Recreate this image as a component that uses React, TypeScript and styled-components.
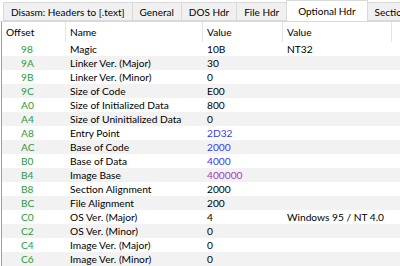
import React from 'react';
import styled, { createGlobalStyle } from 'styled-components';

type Row = {
    offset: string,
    name: string,
    value: string,
    tone?: 'plain' | 'blue' | 'purple',
    note?: string,
}

const rows: Row[] = [
    { offset: '98', name: 'Magic', value: '10B', note: 'NT32' },
    { offset: '9A', name: 'Linker Ver. (Major)', value: '30' },
    { offset: '9B', name: 'Linker Ver. (Minor)', value: '0' },
    { offset: '9C', name: 'Size of Code', value: 'E00' },
    { offset: 'A0', name: 'Size of Initialized Data', value: '800' },
    { offset: 'A4', name: 'Size of Uninitialized Data', value: '0' },
    { offset: 'A8', name: 'Entry Point', value: '2D32', tone: 'blue' },
    { offset: 'AC', name: 'Base of Code', value: '2000', tone: 'blue' },
    { offset: 'B0', name: 'Base of Data', value: '4000', tone: 'blue' },
    { offset: 'B4', name: 'Image Base', value: '400000', tone: 'purple' },
    { offset: 'B8', name: 'Section Alignment', value: '2000' },
    { offset: 'BC', name: 'File Alignment', value: '200' },
    { offset: 'C0', name: 'OS Ver. (Major)', value: '4', note: 'Windows 95 / NT 4.0' },
    { offset: 'C2', name: 'OS Ver. (Minor)', value: '0' },
    { offset: 'C4', name: 'Image Ver. (Major)', value: '0' },
    { offset: 'C6', name: 'Image Ver. (Minor)', value: '0' },
];

const tabs = ['Disasm: Headers to [.text]', 'General', 'DOS Hdr', 'File Hdr', 'Optional Hdr', 'Section Hdrs'];

export default function App() {
    return (
        <>
            <GlobalStyle />
            <Window>
                <TabBar>
                    {tabs.map((t) => (
                        <Tab key={t} $active={t === 'Optional Hdr'}>{t}</Tab>
                    ))}
                </TabBar>
                <Table>
                    <HeaderRow>
                        <HeadCell>Offset</HeadCell>
                        <HeadCell>Name</HeadCell>
                        <HeadCell>Value</HeadCell>
                        <HeadCell>Value</HeadCell>
                        <HeadCell />
                    </HeaderRow>
                    {rows.map((r, i) => (
                        <DataRow key={r.offset} $odd={i % 2 === 1}>
                            <OffsetCell>{r.offset}</OffsetCell>
                            <Cell>{r.name}</Cell>
                            <Cell $tone={r.tone}>{r.value}</Cell>
                            <Cell>{r.note}</Cell>
                            <Cell />
                        </DataRow>
                    ))}
                </Table>
            </Window>
        </>
    );
}

const GlobalStyle = createGlobalStyle`
    html, body {
        margin: 0;
        padding: 0;
        background: #ffffff;
    }
    body {
        font-family: Lato, "Liberation Sans", sans-serif;
        font-size: 10.2px;
        color: #000000;
    }
`

const Window = styled.div`
    width: 400px;
    height: 266px;
    overflow: hidden;
    display: flex;
    flex-direction: column;
`

const TabBar = styled.div`
    height: 22px;
    flex: none;
    display: flex;
    align-items: flex-end;
    padding-left: 4px;
    border-bottom: 1px solid #d9d9d9;
    box-sizing: border-box;
    background: #ffffff;
    white-space: nowrap;
    overflow: hidden;
`

const Tab = styled.div<{ $active?: boolean }>`
    box-sizing: border-box;
    height: ${(p) => (p.$active ? '22px' : '19px')};
    margin-bottom: ${(p) => (p.$active ? '-1px' : '0')};
    padding: ${(p) => (p.$active ? '0 11px 2px' : '0 7px')};
    display: flex;
    align-items: center;
    font-size: 10px;
    background: ${(p) => (p.$active ? '#ffffff' : '#f0f0f0')};
    border: 1px solid #d9d9d9;
    border-bottom: ${(p) => (p.$active ? 'none' : '1px solid #d9d9d9')};
    margin-left: -1px;
    flex: none;
    z-index: ${(p) => (p.$active ? 1 : 0)};
`

const Table = styled.div`
    flex: 1;
    border-left: 1px solid #a0a0a0;
    margin-left: 1px;
`

const grid = `
    display: grid;
    grid-template-columns: 64px 137px 80px 109px 1fr;
`

const HeaderRow = styled.div`
    ${grid}
    height: 20px;
    align-items: stretch;
`

const HeadCell = styled.div`
    border-right: 1px solid #e5e5e5;
    padding-left: 4px;
    display: flex;
    align-items: center;
    &:last-child {
        border-right: none;
    }
`

const DataRow = styled.div<{ $odd?: boolean }>`
    ${grid}
    height: 14px;
    line-height: 14px;
    background: ${(p) => (p.$odd ? '#f2f2f2' : '#ffffff')};
`

const Cell = styled.div<{ $tone?: 'plain' | 'blue' | 'purple' }>`
    padding-left: 4px;
    white-space: nowrap;
    color: ${(p) => (p.$tone === 'blue' ? '#3a3af0' : p.$tone === 'purple' ? '#a43cb8' : '#000000')};
`

const OffsetCell = styled.div`
    padding-left: 19px;
    color: #2e9a3a;
`
